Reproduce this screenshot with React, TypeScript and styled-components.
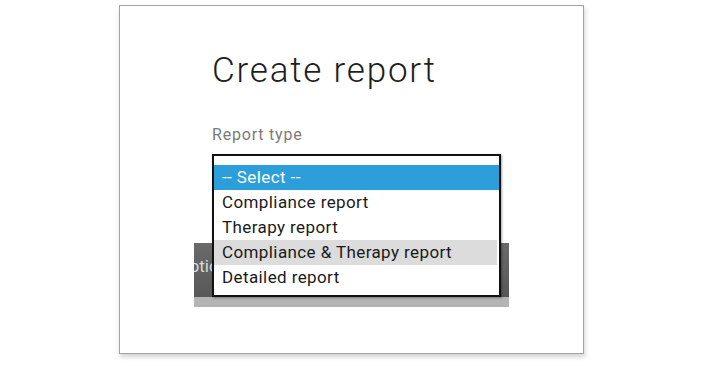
import React from "react";
import styled, { createGlobalStyle } from "styled-components";

const GlobalStyle = createGlobalStyle`
  html, body {
    margin: 0;
    padding: 0;
    background: #ffffff;
  }
  body {
    font-family: Roboto, "Liberation Sans", Arial, sans-serif;
  }
`;

const Page = styled.div`
  width: 705px;
  height: 366px;
  padding: 5px 0 0 119px;
  box-sizing: border-box;
`;

const Card = styled.div`
  width: 465px;
  height: 349px;
  box-sizing: border-box;
  border: 1px solid #a3a3a3;
  background: #ffffff;
  box-shadow: 1px 3px 5px rgba(0, 0, 0, 0.18);
  padding: 48px 0 0 92px;
`;

const Title = styled.h1`
  margin: 0;
  font-family: Roboto, "Liberation Sans", sans-serif;
  font-weight: 300;
  font-size: 35px;
  line-height: 34px;
  letter-spacing: 1.8px;
  color: #1e1e1e;
`;

const Label = styled.div`
  margin-top: 38px;
  font-size: 16px;
  line-height: 18px;
  letter-spacing: 0.8px;
  color: #7a7a7a;
`;

const Stage = styled.div`
  position: relative;
  margin: 10px 0 0 -18px;
  width: 315px;
  padding-top: 89px;
`;

const Bar = styled.div`
  height: 54px;
  overflow: hidden;
  background: linear-gradient(#6a6a6a, #585858);
  color: #d8d8d8;
  font-size: 17px;
  line-height: 20px;
  padding-top: 13px;
  box-sizing: border-box;
  white-space: nowrap;
`;

const BarText = styled.span`
  display: inline-block;
  margin-left: -16px;
`;

const BarEdge = styled.div`
  height: 10px;
  background: #b4b4b4;
`;

const ListBox = styled.ul`
  position: absolute;
  top: 0;
  left: 18px;
  width: 289px;
  height: 143px;
  box-sizing: border-box;
  margin: 0;
  padding: 9px 0 5px;
  list-style: none;
  background: #ffffff;
  border: 2px solid #111111;
  box-shadow: 1px 1px 2px rgba(0, 0, 0, 0.35);
`;

const Option = styled.li<{ $state?: "selected" | "hover" }>`
  height: 25px;
  line-height: 25px;
  padding-left: 8px;
  font-size: 17px;
  letter-spacing: 0.4px;
  color: ${(p) => (p.$state === "selected" ? "#ffffff" : "#1a1a1a")};
  background: ${(p) =>
    p.$state === "selected" ? "#2c9fda" : p.$state === "hover" ? "#dcdcdc" : "transparent"};
  margin-right: ${(p) => (p.$state === "hover" ? "2px" : "0")};
  white-space: nowrap;
`;

const options: { label: string; state?: "selected" | "hover" }[] = [
  { label: "-- Select --", state: "selected" },
  { label: "Compliance report" },
  { label: "Therapy report" },
  { label: "Compliance & Therapy report", state: "hover" },
  { label: "Detailed report" },
];

const App: React.FC = () => {
  return (
    <>
      <GlobalStyle />
      <Page>
        <Card>
          <Title>Create report</Title>
          <Label>Report type</Label>
          <Stage>
            <Bar>
              <BarText>Options</BarText>
            </Bar>
            <BarEdge />
            <ListBox>
              {options.map((o) => (
                <Option key={o.label} $state={o.state}>
                  {o.label}
                </Option>
              ))}
            </ListBox>
          </Stage>
        </Card>
      </Page>
    </>
  );
};

export default App;
